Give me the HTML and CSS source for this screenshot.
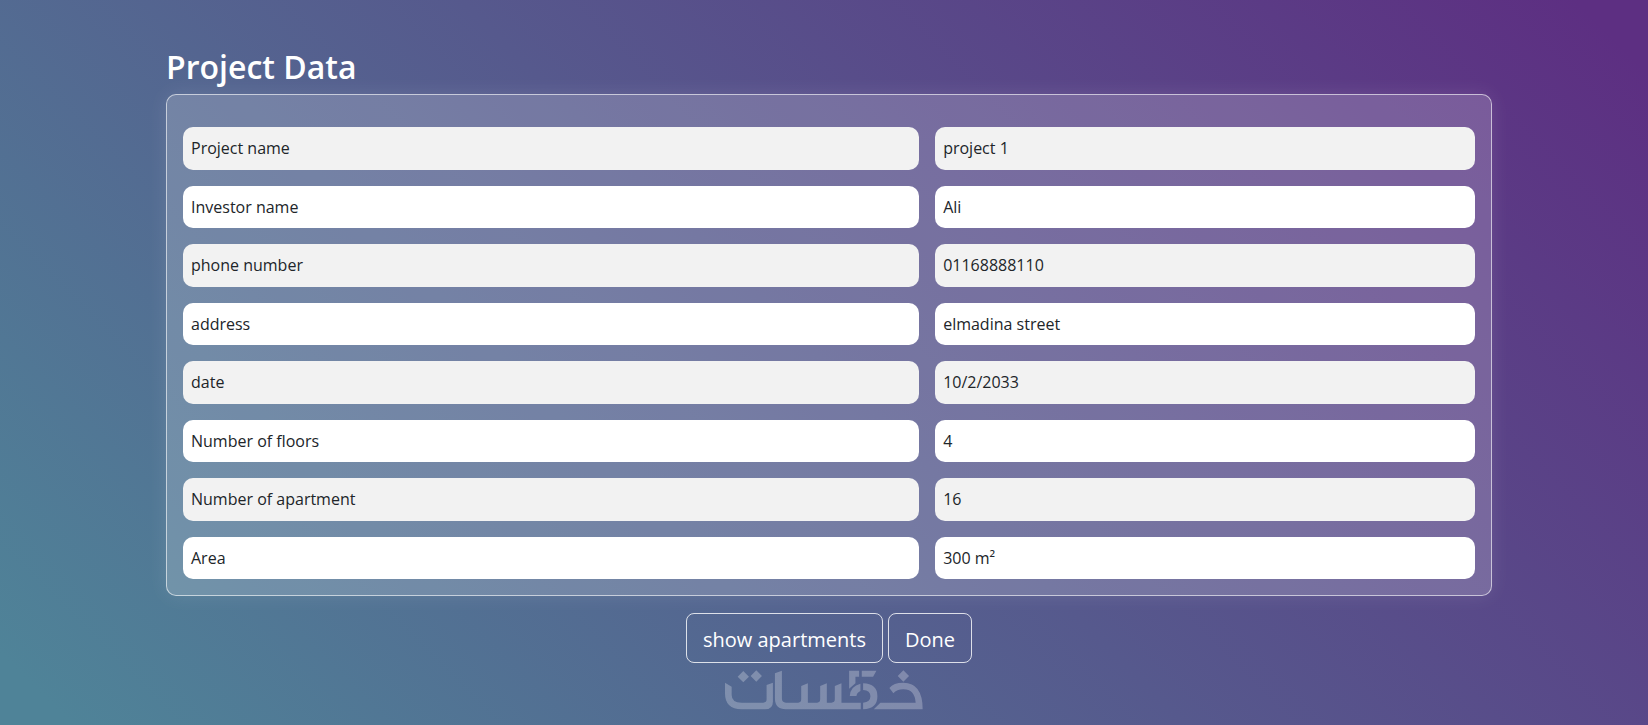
FILE: index.html
```html
<!DOCTYPE html>
<html lang="en">
<head>
  <meta charset="UTF-8">
  <meta name="viewport" content="width=device-width, initial-scale=1.0">
  <title>Project Data</title>
  <link rel="stylesheet" href="styles.css">
</head>
<body>
  <main class="container">
    <h1>Project Data</h1>
    <table class="project-table">
      <tbody>
        <tr><th scope="row">Project name</th><td>project 1</td></tr>
        <tr><th scope="row">Investor name</th><td>Ali</td></tr>
        <tr><th scope="row">phone number</th><td>01168888110</td></tr>
        <tr><th scope="row">address</th><td>elmadina street</td></tr>
        <tr><th scope="row">date</th><td>10/2/2033</td></tr>
        <tr><th scope="row">Number of floors</th><td>4</td></tr>
        <tr><th scope="row">Number of apartment</th><td>16</td></tr>
        <tr><th scope="row">Area</th><td>300 m²</td></tr>
      </tbody>
    </table>
    <div class="buttons">
      <button type="button">show apartments</button>
      <button type="button">Done</button>
    </div>
  </main>

  <!-- Watermark -->
  <svg class="watermark" viewBox="45 30 595 120" aria-hidden="true">
    <path d="M100 33l17 17-17 17-17-17zM139 31l17 17-17 17-17-17zM581 31l17 17-17 17-17-17z"/>
    <path d="M45 68l20 12v25q0 23 30 23h65q10 0 10-10V75l19-7v57q0 23-24 23H95q-50 0-50-48z"/>
    <path d="M195 40l21-8v83q0 13 12 13h37q9 0 9-10V78l20-8v58h28q9 0 9-10V78l20-8v58h14q10 0 10-10V78l20-8v58h58v20H228q-33 0-33-33z"/>
    <path d="M418 32h30v18h-11v20l-19 16zM456 32h44l-10 18h-34zM420 108q2-30 32-37v22q-11 5-12 15zM460 70q43 1 43 39 0 38-43 39v-20q22-1 22-19t-22-19z"/>
    <path d="M539 84q12-16 42-16 58 0 58 80H492l20-20h106q-3-40-37-40-20 0-30 12z"/>
  </svg>
</body>
</html>
```
FILE: styles.css
```css
* {
  margin: 0;
  padding: 0;
  box-sizing: border-box;
}
body {
  font-family: "Open Sans", "Noto Sans", sans-serif;
  font-size: 16px;
  color: #212529;
  background: linear-gradient(45deg, #4f8398 3%, #5d2f82 97%);
  min-height: 100vh;
  position: relative;
}
.container {
  padding: 46px 156px 0 166px;
}
h1 {
  color: #fff;
  font-size: 32px;
  font-weight: 600;
  line-height: 42px;
  margin-bottom: 6px;
}
/* Project table */
.project-table {
  width: 100%;
  height: 502px;
  padding-top: 16px;
  border: 1px solid rgba(255, 255, 255, 0.6);
  border-radius: 10px;
  border-collapse: separate;
  border-spacing: 16px;
  background: rgba(255, 255, 255, 0.19);
  box-shadow: 0 0 20px rgba(255, 255, 255, 0.1);
}
.project-table th,
.project-table td {
  padding: 8px;
  border-radius: 10px;
  background: #fff;
  font-weight: 400;
  text-align: left;
}
.project-table th {
  width: 30%;
}
.project-table td {
  width: 22%;
}
.project-table tr:nth-child(odd) > * {
  background: #f2f2f2;
}
/* Buttons */
.buttons {
  display: flex;
  justify-content: center;
  gap: 5px;
  margin-top: 17px;
}
.buttons button {
  padding: 10px 16px 6px;
  border: 1px solid rgba(255, 255, 255, 0.8);
  border-radius: 8px;
  background: transparent;
  color: #fff;
  font-family: inherit;
  font-size: 20px;
  line-height: 32px;
  cursor: pointer;
}
.watermark {
  position: absolute;
  bottom: 15px;
  left: 50%;
  width: 198px;
  height: 40px;
  transform: translateX(-50%);
  fill: rgba(255, 255, 255, 0.26);
  pointer-events: none;
}
```
